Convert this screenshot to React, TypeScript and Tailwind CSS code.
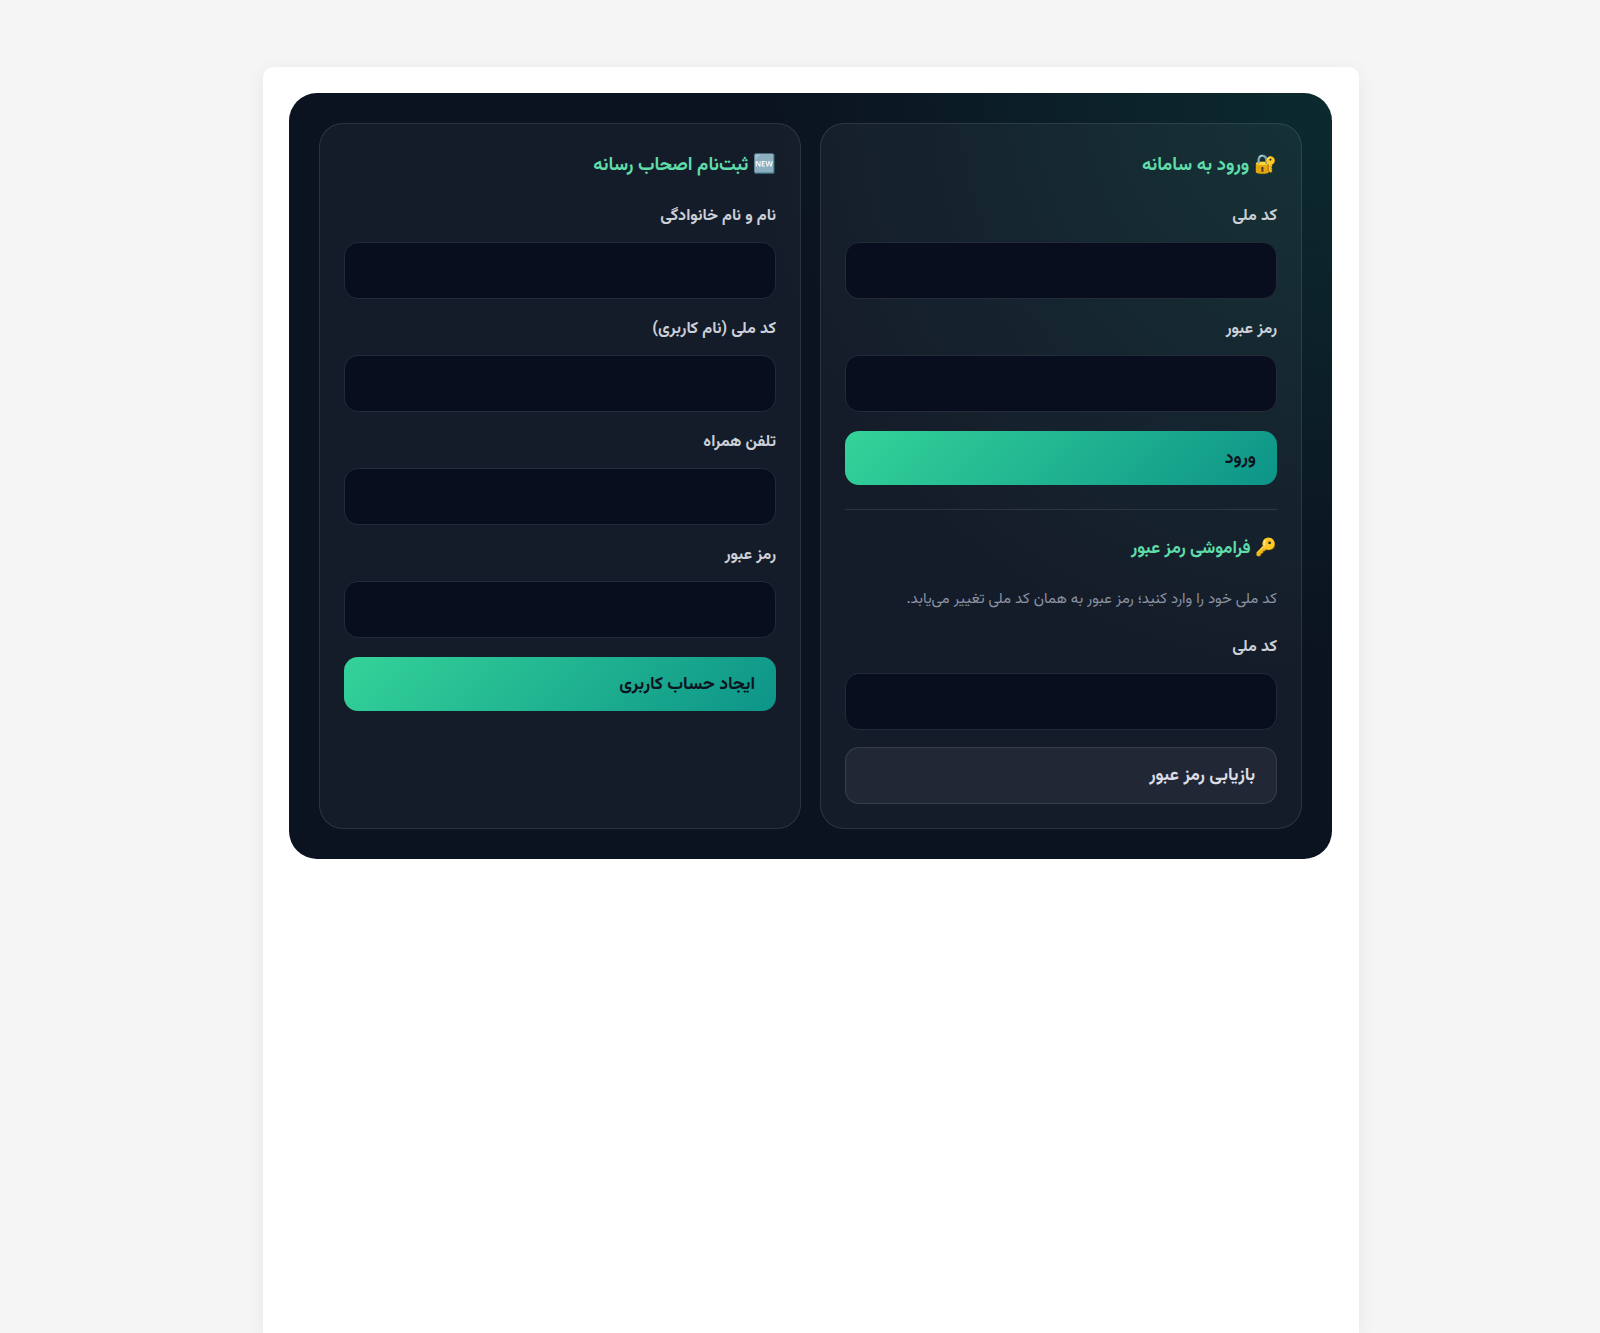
import React from 'react';

const Field = ({ label, className = '' }: { label: string; className?: string }) => (
  <div className={className}>
    <label className="block h-[41px] text-[16.2px] leading-[31px] font-bold text-[#cbd0d9]">{label}</label>
    <input className="block h-[57px] w-full rounded-[14px] border border-[#232a38] bg-[#080e1d] outline-none" dir="rtl" />
  </div>
);

const PrimaryButton = ({ children }: { children: React.ReactNode }) => (
  <button className="mt-[19px] block h-[54px] w-full rounded-[14px] bg-[linear-gradient(135deg,#34d399,#0d9488)] px-[21px] pt-[2px] text-right text-[17.6px] font-bold text-[#0b1220]">
    {children}
  </button>
);

export default function App() {
  return (
    <div className="min-h-screen overflow-hidden bg-[#f5f5f5] pt-[67px] pl-[263px] font-['Vazirmatn','Noto_Sans',sans-serif]">
      <div className="h-[1266px] w-[1096px] rounded-t-[10px] bg-white p-[26px] shadow-[0_4px_20px_rgba(0,0,0,0.06)]">
        <div
          className="grid h-[766px] w-[1043px] grid-cols-2 gap-[19px] rounded-[28px] bg-[#0b1220] bg-[radial-gradient(circle_at_top_right,rgba(16,185,129,0.15),transparent_45%)] p-[30px]"
          dir="rtl"
        >
          <section className="rounded-[24px] border border-white/10 bg-white/[0.045] p-[24px] pt-[26px]">
            <h2 className="h-[30px] text-[18.4px] leading-[32px] font-bold text-[#5fdcaa]">🔐 ورود به سامانه</h2>
            <Field label="کد ملی" className="mt-[21px]" />
            <Field label="رمز عبور" className="mt-[15px]" />
            <PrimaryButton>ورود</PrimaryButton>
            <div className="mt-[24px] h-px bg-white/10" />
            <h3 className="mt-[24px] h-[28px] text-[17.3px] leading-[30px] font-bold text-[#5fdcaa]">🔑 فراموشی رمز عبور</h3>
            <p className="mt-[26px] h-[22px] text-[15px] leading-[24px] text-[#8b93a3]">
              کد ملی خود را وارد کنید؛ رمز عبور به همان کد ملی تغییر می‌یابد.
            </p>
            <Field label="کد ملی" className="mt-[22px]" />
            <button className="mt-[17px] block h-[57px] w-full rounded-[14px] border border-white/10 bg-[#222735] px-[21px] pt-[2px] text-right text-[17.6px] font-bold text-[#d9dde5]">
              بازیابی رمز عبور
            </button>
          </section>
          <section className="rounded-[24px] border border-white/10 bg-white/[0.045] p-[24px] pt-[26px]">
            <h2 className="h-[30px] text-[18.4px] leading-[32px] font-bold text-[#5fdcaa]">🆕 ثبت‌نام اصحاب رسانه</h2>
            <Field label="نام و نام خانوادگی" className="mt-[21px]" />
            <Field label="کد ملی (نام کاربری)" className="mt-[15px]" />
            <Field label="تلفن همراه" className="mt-[15px]" />
            <Field label="رمز عبور" className="mt-[15px]" />
            <PrimaryButton>ایجاد حساب کاربری</PrimaryButton>
          </section>
        </div>
      </div>
    </div>
  );
}
